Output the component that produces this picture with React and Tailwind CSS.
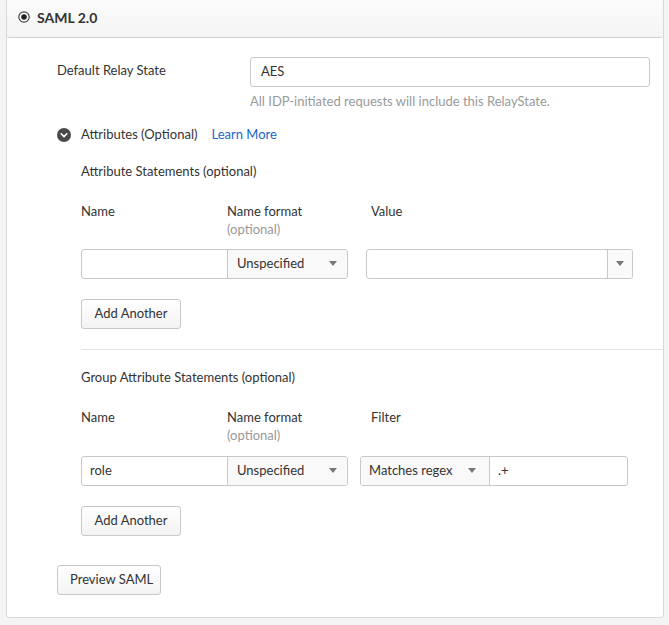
import React from "react";

const Caret = () => (
  <svg width="8" height="5" viewBox="0 0 8 5" className="shrink-0">
    <path d="M0 0h8L4 5z" fill="#777" />
  </svg>
);

const ColumnHeads = ({ third }) => (
  <div className="flex text-[13px] leading-[18px] text-[#333]">
    <div className="w-[146px]">Name</div>
    <div className="w-[144px]">
      <div>Name format</div>
      <div className="text-[#999]">(optional)</div>
    </div>
    <div>{third}</div>
  </div>
);

const Btn = ({ children, className = "" }) => (
  <button
    className={`h-[30px] px-3 whitespace-nowrap rounded-[3px] border border-[#c8c8c8] bg-gradient-to-b from-white to-[#f3f3f3] text-[13px] text-[#333] ${className}`}
  >
    {children}
  </button>
);

const NameFormatSelect = () => (
  <div className="w-[120px] h-full flex items-center justify-between pl-[9px] pr-[10px] bg-[#f9f9f9] border-l border-[#c8c8c8] text-[13px] text-[#333]">
    <span>Unspecified</span>
    <Caret />
  </div>
);

export default function App() {
  return (
    <div className="min-h-[625px] bg-[#f4f4f4] px-[6px] pb-[7px] font-['Lato',sans-serif]">
      <div className="w-[658px] bg-white border border-t-0 border-[#d8d8d8] rounded-b-[4px]">
        {/* header */}
        <div className="h-[38px] flex items-center pl-[11px] gap-[7px] bg-gradient-to-b from-[#fbfbfb] to-[#f5f5f5] border-b border-[#cfcfcf] rounded-b-[3px]">
          <svg width="12" height="12" viewBox="0 0 12 12" className="-mt-[4px]">
            <circle cx="6" cy="6" r="5.2" fill="white" stroke="#444" strokeWidth="1.2" />
            <circle cx="6" cy="6" r="2.8" fill="#222" />
          </svg>
          <span className="text-[14px] font-bold text-[#333] -mt-[2px]">SAML 2.0</span>
        </div>

        <div className="pl-[50px] pt-[19px] pb-[22px]">
          {/* relay state */}
          <div className="flex">
            <div className="w-[193px] pt-[4px] text-[13px] text-[#333]">Default Relay State</div>
            <div>
              <div className="w-[400px] h-[30px] flex items-center px-[10px] border border-[#c8c8c8] rounded-[3px] text-[13px] text-[#333]">
                AES
              </div>
              <div className="mt-[5px] text-[13px] text-[#999]">
                All IDP-initiated requests will include this RelayState.
              </div>
            </div>
          </div>

          {/* attributes toggle */}
          <div className="flex items-center mt-[13px] h-[20px] text-[13px]">
            <svg width="14" height="14" viewBox="0 0 14 14">
              <circle cx="7" cy="7" r="7" fill="#4a4a4a" />
              <path d="M4.2 5.8L7 8.6l2.8-2.8" fill="none" stroke="white" strokeWidth="1.6" strokeLinecap="round" strokeLinejoin="round" />
            </svg>
            <span className="ml-[10px] text-[#333]">Attributes (Optional)</span>
            <span className="ml-[14px] text-[#1a66c9]">Learn More</span>
          </div>

          <div className="pl-[24px]">
            {/* attribute statements */}
            <div className="mt-[17px] text-[13px] leading-[18px] text-[#333]">Attribute Statements (optional)</div>
            <div className="mt-[22px]">
              <ColumnHeads third="Value" />
            </div>
            <div className="flex mt-[11px] h-[30px]">
              <div className="flex w-[267px] border border-[#c8c8c8] rounded-[3px] overflow-hidden">
                <div className="flex-1" />
                <NameFormatSelect />
              </div>
              <div className="ml-[18px] w-[267px] flex border border-[#c8c8c8] rounded-[3px] overflow-hidden">
                <div className="flex-1" />
                <div className="w-[25px] flex items-center justify-center border-l border-[#c8c8c8] bg-[#fafafa]">
                  <Caret />
                </div>
              </div>
            </div>
            <Btn className="mt-[20px] w-[100px]">Add Another</Btn>

            <div className="mt-[20px] border-t border-[#e2e2e2]" />

            {/* group attribute statements */}
            <div className="mt-[18px] text-[13px] leading-[18px] text-[#333]">Group Attribute Statements (optional)</div>
            <div className="mt-[22px]">
              <ColumnHeads third="Filter" />
            </div>
            <div className="flex mt-[12px] h-[30px]">
              <div className="flex w-[267px] border border-[#c8c8c8] rounded-[3px] overflow-hidden">
                <div className="flex-1 flex items-center pl-[8px] text-[13px] text-[#333]">role</div>
                <NameFormatSelect />
              </div>
              <div className="ml-[12px] w-[268px] flex border border-[#c8c8c8] rounded-[3px] overflow-hidden">
                <div className="w-[129px] flex items-center justify-between pl-[8px] pr-[13px] bg-[#f9f9f9] border-r border-[#c8c8c8] text-[13px] text-[#333]">
                  <span>Matches regex</span>
                  <Caret />
                </div>
                <div className="flex-1 flex items-center pl-[8px] text-[13px] text-[#333]">.+</div>
              </div>
            </div>
            <Btn className="mt-[20px] w-[100px]">Add Another</Btn>
          </div>

          <Btn className="mt-[29px] w-[104px] px-0">Preview SAML</Btn>
        </div>
      </div>
    </div>
  );
}
